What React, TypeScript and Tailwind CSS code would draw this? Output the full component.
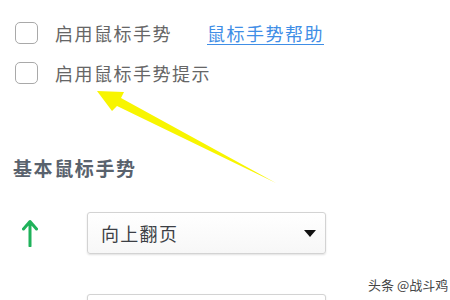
export default function App() {
  return (
    <div
      className="relative w-[450px] h-[300px] overflow-hidden bg-white"
      style={{ fontFamily: '"Noto Sans CJK SC", "Noto Sans", sans-serif' }}
    >
      <div className="pt-[13px] pl-[15px]">
        <label className="flex h-[40px] items-center">
          <span className="h-[22px] w-[23px] rounded-[5px] border-[1.5px] border-[#a9a9a9] bg-white" />
          <span className="ml-[17px] text-[18px] tracking-[1.5px] text-[#666]">启用鼠标手势</span>
          <a className="ml-[35px] text-[18px] tracking-[1.5px] text-[#3f8ee6] underline underline-offset-[3px]">
            鼠标手势帮助
          </a>
        </label>
        <label className="flex h-[40px] items-center">
          <span className="h-[22px] w-[23px] rounded-[5px] border-[1.5px] border-[#a9a9a9] bg-white" />
          <span className="ml-[17px] text-[18px] tracking-[1.5px] text-[#666]">启用鼠标手势提示</span>
        </label>

        <h3 className="mt-[62px] -ml-[2px] text-[19px] leading-[26px] font-bold tracking-[1.6px] text-[#59626d]">
          基本鼠标手势
        </h3>

        <div className="mt-[31px] flex flex-col gap-[40px]">
          <div className="flex items-center">
            <div className="flex w-[30px] justify-center">
              <svg width="16" height="28" viewBox="0 0 16 28" fill="none">
                <path d="M8 27V3M1.5 10L8 2.5L14.5 10" stroke="#1fb25a" strokeWidth="3" strokeLinecap="round" strokeLinejoin="round" />
              </svg>
            </div>
            <div className="ml-[42px] flex h-[42px] w-[239px] items-center justify-between rounded-[3px] border border-[#d3d3d3] bg-gradient-to-b from-white to-[#f7f7f7] pl-[13px] pr-[9px] shadow-[0_1px_2px_rgba(0,0,0,0.12)]">
              <span className="text-[18px] tracking-[1.3px] text-[#3c3f45]">向上翻页</span>
              <svg width="12" height="7" viewBox="0 0 12 7">
                <path d="M0 0H12L6 7Z" fill="#111" />
              </svg>
            </div>
          </div>
          <div className="flex items-center">
            <div className="w-[30px]" />
            <div className="ml-[42px] h-[42px] w-[239px] rounded-[3px] border border-[#d3d3d3] bg-white shadow-[0_1px_2px_rgba(0,0,0,0.12)]" />
          </div>
        </div>
      </div>

      <svg className="pointer-events-none absolute inset-0" width="450" height="300" viewBox="0 0 450 300">
        <polygon points="97,91 124,92 121,98 276,183 117,106 112,111" fill="#f8f500" />
      </svg>

      <span className="absolute left-[368px] top-[277px] whitespace-nowrap text-[13px] leading-[16px] text-[#444]">
        头条 @战斗鸡
      </span>
    </div>
  );
}
